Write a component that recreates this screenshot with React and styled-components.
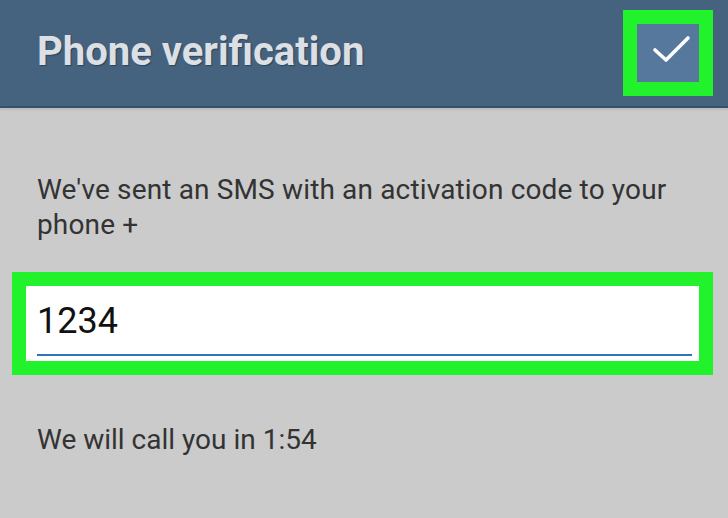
import React from "react";
import styled, { createGlobalStyle } from "styled-components";

const Global = createGlobalStyle`
  html, body { margin: 0; padding: 0; }
  body {
    width: 728px;
    height: 518px;
    overflow: hidden;
    background: #cbcbcb;
    font-family: Roboto, "Liberation Sans", sans-serif;
  }
`;

const Screen = styled.div`
  width: 728px;
  height: 518px;
  background: #cbcbcb;
  display: flex;
  flex-direction: column;
`;

const Header = styled.header`
  height: 106px;
  flex: 0 0 auto;
  background: #45637f;
  border-bottom: 2px solid #37516a;
  box-shadow: 0 2px 2px rgba(0, 0, 0, 0.08);
  display: flex;
  align-items: center;
  justify-content: space-between;
  padding: 0 15px 0 37px;
  box-sizing: content-box;
`;

const Title = styled.h1`
  margin: 0 0 3px 0;
  font-family: Roboto, "Liberation Sans", sans-serif;
  font-weight: 700;
  font-size: 40px;
  color: #dcdfe4;
  letter-spacing: 0;
  text-shadow: 1px 1px 1px rgba(20, 35, 50, 0.5);
`;

const Highlight = styled.div`
  border: 14px solid #22f22c;
  box-sizing: border-box;
  width: ${(p) => p.$w}px;
  height: ${(p) => p.$h}px;
`;

const CheckButton = styled.button`
  all: unset;
  width: 100%;
  height: 100%;
  display: block;
  background: #55789c;
`;

const Content = styled.main`
  display: flex;
  flex-direction: column;
  padding: 0 15px 0 12px;
`;

const Message = styled.p`
  margin: ${(p) => p.$top}px 0 0 25px;
  font-size: 28px;
  line-height: 35px;
  letter-spacing: ${(p) => p.$spacing || 0}px;
  color: #333333;
  font-weight: 400;
`;

const InputBox = styled.div`
  margin-top: 30px;
  border: 14px solid #22f22c;
  background: #ffffff;
  padding: 1px 7px 5px 11px;
`;

const CodeInput = styled.input`
  display: block;
  width: 100%;
  box-sizing: border-box;
  height: 69px;
  border: none;
  border-bottom: 2px solid #3273b8;
  outline: none;
  padding: 0;
  background: transparent;
  font-family: Roboto, "Liberation Sans", sans-serif;
  font-size: 36px;
  color: #111111;
`;

export default function App() {
  return (
    <>
      <Global />
      <Screen>
        <Header>
          <Title>Phone verification</Title>
          <Highlight $w={90} $h={86}>
            <CheckButton aria-label="Confirm">
              <svg width="62" height="58" viewBox="0 0 62 58">
                <polyline
                  points="18,26 29,36 51,14"
                  fill="none"
                  stroke="#ffffff"
                  strokeWidth="3.6"
                  strokeLinecap="round"
                  strokeLinejoin="round"
                />
              </svg>
            </CheckButton>
          </Highlight>
        </Header>
        <Content>
          <Message $top={64} $spacing={0.15}>
            We've sent an SMS with an activation code to your phone +
          </Message>
          <InputBox>
            <CodeInput defaultValue="1234" readOnly />
          </InputBox>
          <Message $top={47}>We will call you in 1:54</Message>
        </Content>
      </Screen>
    </>
  );
}
